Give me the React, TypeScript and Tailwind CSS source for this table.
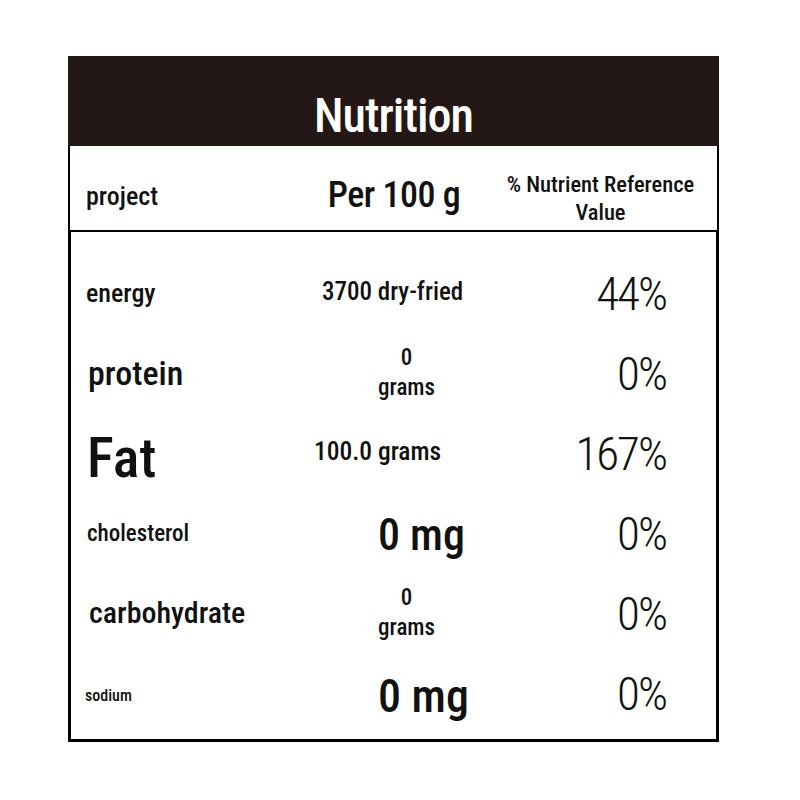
import React from "react";

const rc = { fontFamily: '"Roboto Condensed", "Open Sans", sans-serif' };

type Row = {
  label: string;
  labelCls: string;
  mid: React.ReactNode;
  midCls: string;
  pct: string;
};

const Stack = () => (
  <span className="flex flex-col items-center leading-[30px]">
    <span>0</span>
    <span>grams</span>
  </span>
);

const rows: Row[] = [
  { label: "energy", labelCls: "text-[26px]", mid: "3700 dry-fried", midCls: "text-[25px] ml-[36px]", pct: "44%" },
  { label: "protein", labelCls: "text-[34px] ml-[2px]", mid: <Stack />, midCls: "text-[23px] ml-[92px]", pct: "0%" },
  { label: "Fat", labelCls: "text-[56px] ml-[1px] mt-[10px]", mid: "100.0 grams", midCls: "text-[25.5px] ml-[28px]", pct: "167%" },
  { label: "cholesterol", labelCls: "text-[23px] ml-[1px]", mid: "0 mg", midCls: "text-[44px] ml-[92px] mt-[4px]", pct: "0%" },
  { label: "carbohydrate", labelCls: "text-[30px] ml-[3px]", mid: <Stack />, midCls: "text-[23px] ml-[92px]", pct: "0%" },
  { label: "sodium", labelCls: "text-[16px] ml-[-1px] mt-[6px]", mid: "0 mg", midCls: "text-[46px] ml-[92px] mt-[6px]", pct: "0%" },
];

export default function App() {
  return (
    <div className="w-[800px] h-[800px] bg-white" style={rc}>
      <div className="pt-[56px] pl-[68px]">
        <div className="w-[651px]">
          <div className="h-[90px] bg-[#231815] flex items-end justify-center pb-[6px]">
            <span className="text-white text-[48px] font-medium leading-none tracking-[-1px] whitespace-nowrap">Nutrition</span>
          </div>
          <div className="h-[86px] border-x-2 border-b-2 border-black flex items-center text-[#111] whitespace-nowrap">
            <div className="w-[216px] pl-[16px] pt-[16px] text-[26px] font-medium">project</div>
            <div className="w-[196px] flex justify-center text-[36px] font-medium tracking-[-0.5px] pt-[14px] ml-[10px]">Per 100 g</div>
            <div className="flex-1 flex flex-col items-center text-[22.5px] font-medium leading-[28px] pt-[20px] pr-[8px]">
              <span>% Nutrient Reference</span>
              <span>Value</span>
            </div>
          </div>
          <div className="h-[510px] border-x-[3px] border-b-[3px] border-black pt-[21px] text-[#111] whitespace-nowrap">
            {rows.map((r, i) => (
              <div key={i} className="h-[80px] flex items-center">
                <div className="w-[215px] pl-[15px]">
                  <span className={`font-medium leading-none block ${r.labelCls}`}>{r.label}</span>
                </div>
                <div className="w-[180px]">
                  <div className={`font-medium leading-none inline-block ${r.midCls}`}>{r.mid}</div>
                </div>
                <div className="w-[205px] flex justify-end">
                  <span className="text-[47px] font-light leading-none tracking-[-2px] mr-[5px]">{r.pct}</span>
                </div>
              </div>
            ))}
          </div>
        </div>
      </div>
    </div>
  );
}
